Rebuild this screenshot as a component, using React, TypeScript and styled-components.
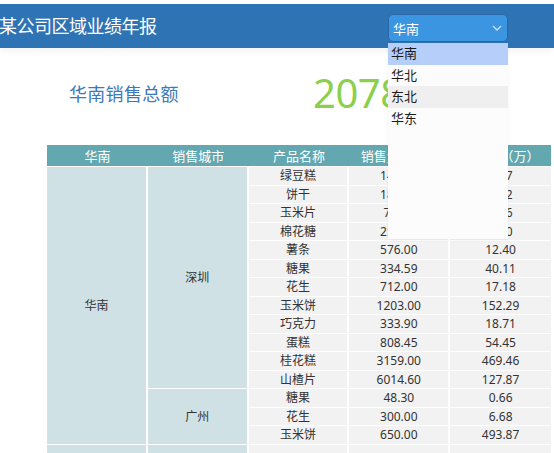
import React from 'react';
import styled, { createGlobalStyle } from 'styled-components';

const GlobalStyle = createGlobalStyle`
  html, body {
    margin: 0;
    padding: 0;
    background: #fff;
    overflow: hidden;
  }
  body {
    font-family: "Noto Sans", "Noto Sans CJK SC", sans-serif;
  }
`;

type Item = { name: string, qty: string, amount: string };
type City = { name: string, items: Item[] };

const cities: City[] = [
  {
    name: '深圳',
    items: [
      { name: '绿豆糕', qty: '145.00', amount: '3.27' },
      { name: '饼干', qty: '186.50', amount: '2.52' },
      { name: '玉米片', qty: '78.20', amount: '9.86' },
      { name: '棉花糖', qty: '254.00', amount: '5.10' },
      { name: '薯条', qty: '576.00', amount: '12.40' },
      { name: '糖果', qty: '334.59', amount: '40.11' },
      { name: '花生', qty: '712.00', amount: '17.18' },
      { name: '玉米饼', qty: '1203.00', amount: '152.29' },
      { name: '巧克力', qty: '333.90', amount: '18.71' },
      { name: '蛋糕', qty: '808.45', amount: '54.45' },
      { name: '桂花糕', qty: '3159.00', amount: '469.46' },
      { name: '山楂片', qty: '6014.60', amount: '127.87' },
    ],
  },
  {
    name: '广州',
    items: [
      { name: '糖果', qty: '48.30', amount: '0.66' },
      { name: '花生', qty: '300.00', amount: '6.68' },
      { name: '玉米饼', qty: '650.00', amount: '493.87' },
    ],
  },
];

const options = ['华南', '华北', '东北', '华东'];

const Page = styled.div`
  padding-top: 4px;
  height: 449px;
  overflow: hidden;
`;

const TopBar = styled.div`
  height: 44px;
  background: #2e74b5;
  display: flex;
  justify-content: space-between;
  align-items: flex-start;
  box-shadow: 0 3px 7px rgba(0, 0, 0, 0.05);
  position: relative;
  z-index: 2;
`;

const Title = styled.h1`
  margin: 0;
  font-size: 18px;
  font-weight: 400;
  line-height: 44px;
  color: #fff;
  letter-spacing: -0.5px;
  margin-left: -1px;
`;

const SelectWrap = styled.div`
  position: relative;
  margin-top: 10px;
  margin-right: 46px;
`;

const SelectBox = styled.div`
  box-sizing: border-box;
  width: 120px;
  height: 28px;
  background: #3b95e0;
  border: 1px solid #2866a6;
  border-radius: 5px;
  display: flex;
  align-items: center;
  justify-content: space-between;
  padding: 0 5px 0 4px;
  color: #fff;
  font-size: 13px;
`;

const OptionList = styled.ul`
  position: absolute;
  top: 29px;
  left: 0;
  width: 120px;
  height: 196px;
  margin: 0;
  padding: 0;
  list-style: none;
  background: #fcfcfc;
  box-shadow: 0 1px 3px rgba(0, 0, 0, 0.06);
`;

const Option = styled.li<{ $state?: 'selected' | 'hover' }>`
  height: 21.7px;
  line-height: 21.7px;
  padding-left: 3px;
  font-size: 13px;
  color: #1a1a1a;
  background: ${({ $state }) => ($state === 'selected' ? '#b5cefa' : $state === 'hover' ? '#efefef' : 'transparent')};
`;

const Summary = styled.div`
  display: flex;
  align-items: center;
  height: 97px;
  padding-left: 69px;
  box-sizing: border-box;
  padding-bottom: 8px;
`;

const SummaryLabel = styled.div`
  width: 244px;
  font-size: 18px;
  color: #3b79b9;
  letter-spacing: 0.3px;
`;

const SummaryValue = styled.div`
  font-size: 40px;
  color: #8ccf4c;
  line-height: 1;
  letter-spacing: -0.5px;
`;

const Table = styled.table`
  margin-left: 47px;
  width: 504px;
  table-layout: fixed;
  border-collapse: separate;
  border-spacing: 0;
  font-size: 12px;
  color: #333;
`;

const HeadCell = styled.th`
  height: 21px;
  padding: 0;
  background: #63a8b0;
  color: #fff;
  font-size: 13px;
  font-weight: 400;
  text-align: center;
  border-bottom: 1px solid #fff;
  white-space: nowrap;
`;

const Cell = styled.td<{ $kind: 'group' | 'data', $tall?: boolean }>`
  height: ${({ $tall }) => ($tall ? '30px' : '17.5px')};
  padding: 0;
  line-height: 17.5px;
  text-align: center;
  vertical-align: middle;
  background: ${({ $kind }) => ($kind === 'group' ? '#cfe1e5' : '#f2f2f2')};
  border-right: 2px solid #fff;
  border-bottom: 1px solid #fff;
  white-space: nowrap;
  overflow: hidden;

  &:last-child {
    border-right: 0;
  }
`;

const Chevron = () => (
  <svg width="10" height="6" viewBox="0 0 10 6">
    <path d="M1 1 L5 5 L9 1" fill="none" stroke="#cfe2f4" strokeWidth="1.3" />
  </svg>
);

function renderRows() {
  const total = cities.reduce((n, c) => n + c.items.length, 0);
  const rows: React.ReactNode[] = [];
  cities.forEach((city, ci) => {
    city.items.forEach((item, ii) => {
      rows.push(
        <tr key={`${ci}-${ii}`}>
          {ci === 0 && ii === 0 && (
            <Cell $kind="group" rowSpan={total}>华南</Cell>
          )}
          {ii === 0 && (
            <Cell $kind="group" rowSpan={city.items.length}>{city.name}</Cell>
          )}
          <Cell $kind="data">{item.name}</Cell>
          <Cell $kind="data">{item.qty}</Cell>
          <Cell $kind="data">{item.amount}</Cell>
        </tr>,
      );
    });
  });
  return rows;
}

export default function App() {
  return (
    <Page>
      <GlobalStyle />
      <TopBar>
        <Title>某公司区域业绩年报</Title>
        <SelectWrap>
          <SelectBox>
            <span>华南</span>
            <Chevron />
          </SelectBox>
          <OptionList>
            {options.map((o, i) => (
              <Option key={o} $state={i === 0 ? 'selected' : i === 2 ? 'hover' : undefined}>{o}</Option>
            ))}
          </OptionList>
        </SelectWrap>
      </TopBar>
      <Summary>
        <SummaryLabel>华南销售总额</SummaryLabel>
        <SummaryValue>20787.6</SummaryValue>
      </Summary>
      <Table>
        <thead>
          <tr>
            <HeadCell>华南</HeadCell>
            <HeadCell>销售城市</HeadCell>
            <HeadCell>产品名称</HeadCell>
            <HeadCell>销售量（吨）</HeadCell>
            <HeadCell>销售额（万）</HeadCell>
          </tr>
        </thead>
        <tbody>
          {renderRows()}
          <tr>
            <Cell $kind="group" $tall>合计</Cell>
            <Cell $kind="group" $tall />
            <Cell $kind="data" $tall />
            <Cell $kind="data" $tall>15506.54</Cell>
            <Cell $kind="data" $tall>1466.27</Cell>
          </tr>
        </tbody>
      </Table>
    </Page>
  );
}
